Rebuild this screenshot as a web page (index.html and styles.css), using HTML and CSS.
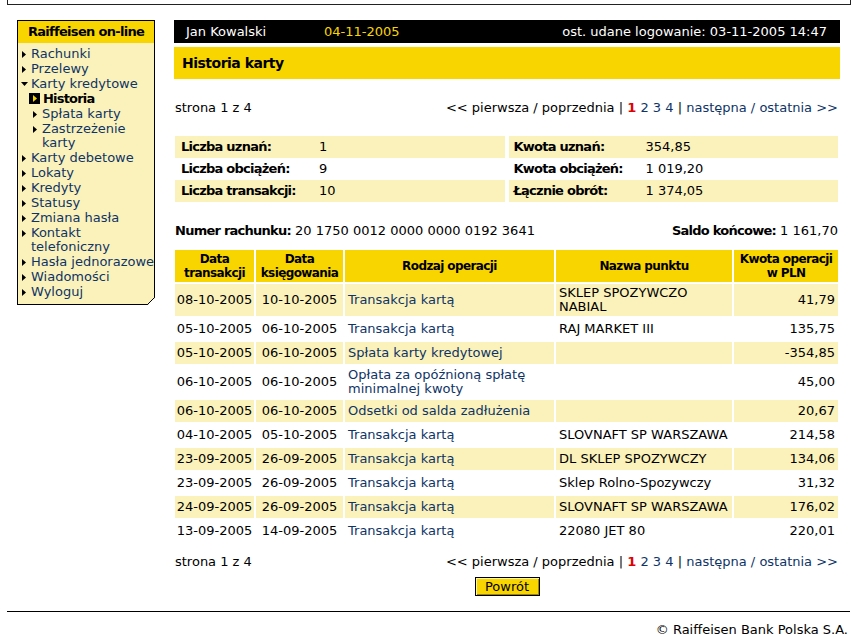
FILE: index.html
```html
<!DOCTYPE html>
<html lang="pl">
<head>
<meta charset="utf-8">
<title>Historia karty</title>
<link rel="stylesheet" href="styles.css">
</head>
<body>
<div class="topframe"></div>
<div class="layout">
  <nav class="side">
    <div class="side-head">Raiffeisen on-line</div>
    <ul class="menu">
      <li class="mi"><span class="ic"><svg width="4" height="7" viewBox="0 0 4 7"><path d="M0 0L4 3.5L0 7Z"/></svg></span><a href="#">Rachunki</a></li>
      <li class="mi"><span class="ic"><svg width="4" height="7" viewBox="0 0 4 7"><path d="M0 0L4 3.5L0 7Z"/></svg></span><a href="#">Przelewy</a></li>
      <li class="mi"><span class="ic"><svg class="down" width="7" height="4" viewBox="0 0 7 4"><path d="M0 0H7L3.5 4Z"/></svg></span><a href="#">Karty kredytowe</a></li>
      <li class="mi cur"><span class="sq"><svg width="4" height="7" viewBox="0 0 4 7"><path d="M0 0L4 3.5L0 7Z"/></svg></span><a href="#">Historia</a></li>
      <li class="mi sub"><span class="ic"><svg width="4" height="7" viewBox="0 0 4 7"><path d="M0 0L4 3.5L0 7Z"/></svg></span><a href="#">Spłata karty</a></li>
      <li class="mi sub"><span class="ic"><svg width="4" height="7" viewBox="0 0 4 7"><path d="M0 0L4 3.5L0 7Z"/></svg></span><a href="#">Zastrzeżenie<br>karty</a></li>
      <li class="mi"><span class="ic"><svg width="4" height="7" viewBox="0 0 4 7"><path d="M0 0L4 3.5L0 7Z"/></svg></span><a href="#">Karty debetowe</a></li>
      <li class="mi"><span class="ic"><svg width="4" height="7" viewBox="0 0 4 7"><path d="M0 0L4 3.5L0 7Z"/></svg></span><a href="#">Lokaty</a></li>
      <li class="mi"><span class="ic"><svg width="4" height="7" viewBox="0 0 4 7"><path d="M0 0L4 3.5L0 7Z"/></svg></span><a href="#">Kredyty</a></li>
      <li class="mi"><span class="ic"><svg width="4" height="7" viewBox="0 0 4 7"><path d="M0 0L4 3.5L0 7Z"/></svg></span><a href="#">Statusy</a></li>
      <li class="mi"><span class="ic"><svg width="4" height="7" viewBox="0 0 4 7"><path d="M0 0L4 3.5L0 7Z"/></svg></span><a href="#">Zmiana hasła</a></li>
      <li class="mi"><span class="ic"><svg width="4" height="7" viewBox="0 0 4 7"><path d="M0 0L4 3.5L0 7Z"/></svg></span><a href="#">Kontakt<br>telefoniczny</a></li>
      <li class="mi"><span class="ic"><svg width="4" height="7" viewBox="0 0 4 7"><path d="M0 0L4 3.5L0 7Z"/></svg></span><a href="#">Hasła jednorazowe</a></li>
      <li class="mi"><span class="ic"><svg width="4" height="7" viewBox="0 0 4 7"><path d="M0 0L4 3.5L0 7Z"/></svg></span><a href="#">Wiadomości</a></li>
      <li class="mi"><span class="ic"><svg width="4" height="7" viewBox="0 0 4 7"><path d="M0 0L4 3.5L0 7Z"/></svg></span><a href="#">Wyloguj</a></li>
    </ul>
    <svg class="corner" width="8" height="8" viewBox="0 0 8 8"><path d="M0.5 8L8 0.5V8Z" fill="#fff"/><path d="M0.5 7.5L7.5 0.5" stroke="#000" stroke-width="1"/></svg>
  </nav>

  <main class="main">
    <div class="userbar">
      <span class="ub-name">Jan Kowalski</span>
      <span class="ub-date">04-11-2005</span>
      <span class="ub-last">ost. udane logowanie: 03-11-2005 14:47</span>
    </div>
    <h1 class="title">Historia karty</h1>

    <div class="pager">
      <span>strona 1 z 4</span>
      <span>&lt;&lt; pierwsza / poprzednia | <b class="pg-cur">1</b> <a href="#">2</a> <a href="#">3</a> <a href="#">4</a> | <span class="nav-links"><a href="#">następna</a> / <a href="#">ostatnia &gt;&gt;</a></span></span>
    </div>

    <div class="summary">
      <div class="sum-col">
        <div class="sum-row alt"><b>Liczba uznań:</b><span>1</span></div>
        <div class="sum-row"><b>Liczba obciążeń:</b><span>9</span></div>
        <div class="sum-row alt"><b>Liczba transakcji:</b><span>10</span></div>
      </div>
      <div class="sum-col right">
        <div class="sum-row alt"><b>Kwota uznań:</b><span>354,85</span></div>
        <div class="sum-row"><b>Kwota obciążeń:</b><span>1 019,20</span></div>
        <div class="sum-row alt"><b>Łącznie obrót:</b><span>1 374,05</span></div>
      </div>
    </div>

    <div class="acct">
      <span><b>Numer rachunku:</b> 20 1750 0012 0000 0000 0192 3641</span>
      <span><b>Saldo końcowe:</b> 1 161,70</span>
    </div>

    <table class="tx">
      <colgroup>
        <col class="w1"><col class="w2"><col class="w3"><col class="w4"><col class="w5">
      </colgroup>
      <thead>
        <tr><th>Data<br>transakcji</th><th>Data<br>księgowania</th><th>Rodzaj operacji</th><th>Nazwa punktu</th><th>Kwota operacji<br>w PLN</th></tr>
      </thead>
      <tbody>
        <tr class="alt"><td class="c">08-10-2005</td><td class="c">10-10-2005</td><td><a href="#">Transakcja kartą</a></td><td>SKLEP SPOZYWCZO<br>NABIAL</td><td class="num">41,79</td></tr>
        <tr><td class="c">05-10-2005</td><td class="c">06-10-2005</td><td><a href="#">Transakcja kartą</a></td><td>RAJ MARKET III</td><td class="num">135,75</td></tr>
        <tr class="alt"><td class="c">05-10-2005</td><td class="c">06-10-2005</td><td><a href="#">Spłata karty kredytowej</a></td><td></td><td class="num">-354,85</td></tr>
        <tr><td class="c">06-10-2005</td><td class="c">06-10-2005</td><td><a href="#">Opłata za opóźnioną spłatę<br>minimalnej kwoty</a></td><td></td><td class="num">45,00</td></tr>
        <tr class="alt"><td class="c">06-10-2005</td><td class="c">06-10-2005</td><td><a href="#">Odsetki od salda zadłużenia</a></td><td></td><td class="num">20,67</td></tr>
        <tr><td class="c">04-10-2005</td><td class="c">05-10-2005</td><td><a href="#">Transakcja kartą</a></td><td>SLOVNAFT SP WARSZAWA</td><td class="num">214,58</td></tr>
        <tr class="alt"><td class="c">23-09-2005</td><td class="c">26-09-2005</td><td><a href="#">Transakcja kartą</a></td><td>DL SKLEP SPOZYWCZY</td><td class="num">134,06</td></tr>
        <tr><td class="c">23-09-2005</td><td class="c">26-09-2005</td><td><a href="#">Transakcja kartą</a></td><td>Sklep Rolno-Spozywczy</td><td class="num">31,32</td></tr>
        <tr class="alt"><td class="c">24-09-2005</td><td class="c">26-09-2005</td><td><a href="#">Transakcja kartą</a></td><td>SLOVNAFT SP WARSZAWA</td><td class="num">176,02</td></tr>
        <tr><td class="c">13-09-2005</td><td class="c">14-09-2005</td><td><a href="#">Transakcja kartą</a></td><td>22080 JET 80</td><td class="num">220,01</td></tr>
      </tbody>
    </table>

    <div class="pager bottom">
      <span>strona 1 z 4</span>
      <span>&lt;&lt; pierwsza / poprzednia | <b class="pg-cur">1</b> <a href="#">2</a> <a href="#">3</a> <a href="#">4</a> | <span class="nav-links"><a href="#">następna</a> / <a href="#">ostatnia &gt;&gt;</a></span></span>
    </div>

    <div class="actions"><button class="btn" type="button">Powrót</button></div>
  </main>
</div>
<div class="footline"></div>
<div class="copy">© Raiffeisen Bank Polska S.A.</div>
</body>
</html>
```

FILE: styles.css
```css
html, body {
  margin: 0;
  padding: 0;
  height: 100%;
  overflow: hidden;
}
body {
  font-family: "DejaVu Sans", Verdana, sans-serif;
  font-size: 13px;
  line-height: 15px;
  color: #000;
  background: #fff;
}
a {
  color: #0f3466;
  text-decoration: none;
}

.topframe {
  height: 4px;
  margin: 0 1px 0 7px;
  border: 1px solid #222;
  border-top: 0;
}

.layout {
  display: flex;
  align-items: flex-start;
  padding: 15px 0 0 17px;
}

/* sidebar */
.side {
  position: relative;
  flex: none;
  width: 136px;
  border: 1px solid #000;
  background: #fbf2bb;
}
.side-head {
  background: #f9d500;
  font-weight: bold;
  text-align: center;
  line-height: 22px;
  letter-spacing: -0.7px;
}
.menu {
  list-style: none;
  margin: 0;
  padding: 4px 0 4px;
}
.mi {
  display: flex;
  align-items: flex-start;
  line-height: 14px;
  padding-left: 4px;
  margin-bottom: 1px;
  white-space: nowrap;
}
.mi .ic {
  flex: none;
  width: 9px;
  height: 14px;
  display: flex;
  align-items: center;
}
.mi .ic svg { display: block; fill: #000; }
.mi .ic svg.down { margin-left: -1px; }
.mi.sub { padding-left: 15px; }
.mi.cur { padding-left: 11px; }
.mi .sq {
  flex: none;
  width: 11px;
  height: 11px;
  margin: 1px 3px 0 0;
  background: #000;
  display: flex;
  align-items: center;
  justify-content: center;
}
.mi .sq svg { display: block; fill: #f9d500; }
.mi.cur a {
  color: #000;
  font-weight: bold;
  letter-spacing: -0.8px;
}
.corner {
  position: absolute;
  right: -1px;
  bottom: -1px;
  display: block;
}

/* main */
.main {
  margin-left: 19px;
  width: 666px;
}
.userbar {
  display: flex;
  height: 23px;
  line-height: 23px;
  background: #000;
  color: #fff;
}
.ub-name {
  width: 138px;
  padding-left: 12px;
}
.ub-date { color: #f9d500; }
.ub-last {
  margin-left: auto;
  padding-right: 13px;
}
.title {
  margin: 4px 0 0;
  height: 32px;
  line-height: 33px;
  padding-left: 8px;
  background: #f9d500;
  font-size: 14px;
  font-weight: bold;
  letter-spacing: -0.5px;
}

.pager {
  display: flex;
  justify-content: space-between;
  margin-top: 21px;
  padding: 0 2px 0 1px;
}
.pager.bottom { margin-top: 10px; }
.pg-cur { color: #e00000; }
.nav-links { color: #0f3466; }

.summary {
  display: grid;
  grid-template-columns: 1fr 1fr;
  column-gap: 4px;
  margin-top: 21px;
  padding: 0 2px 0 1px;
}
.sum-row {
  display: flex;
  height: 22px;
  line-height: 22px;
  padding-left: 6px;
}
.sum-row.alt { background: #fbf2bb; }
.sum-row b {
  flex: none;
  width: 138px;
  letter-spacing: -0.75px;
}
.sum-col.right .sum-row { padding-left: 5px; }
.sum-col.right .sum-row b { width: 132px; }

.acct {
  display: flex;
  justify-content: space-between;
  margin-top: 21px;
  padding: 0 2px 0 1px;
}
.acct b { letter-spacing: -0.75px; }

/* transactions */
.tx {
  margin-top: 10px;
  margin-left: -1px;
  width: 667px;
  table-layout: fixed;
  border-collapse: separate;
  border-spacing: 2px;
}
.tx .w1 { width: 79px; }
.tx .w2 { width: 87px; }
.tx .w3 { width: 209px; }
.tx .w4 { width: 176px; }
.tx .w5 { width: 104px; }
.tx thead tr { height: 32px; }
.tx th {
  background: #f9d500;
  font-size: 12px;
  line-height: 14px;
  letter-spacing: -0.6px;
  font-weight: bold;
  padding: 2px 0;
  white-space: nowrap;
  vertical-align: middle;
  text-align: center;
}
.tx tbody tr { height: 22px; }
.tx td {
  padding: 2px 3px;
  line-height: 14px;
  white-space: nowrap;
  vertical-align: middle;
}
.tx tr.alt td { background: #fbf2bb; }
.tx td.c {
  text-align: center;
  padding-left: 1px;
  padding-right: 1px;
}
.tx td.num { text-align: right; }

.actions {
  display: flex;
  justify-content: center;
  margin-top: 8px;
}
.btn {
  width: 65px;
  height: 19px;
  padding: 0;
  font-family: "DejaVu Sans", Verdana, sans-serif;
  font-size: 13px;
  line-height: 15px;
  color: #000;
  background: #f9d500;
  border: 1px solid #000;
  box-shadow: inset 1px 1px 0 #fff7b0, inset -1px -1px 0 #9c8400;
}

.footline {
  margin: 15px 2px 0 7px;
  border-top: 1px solid #000;
}
.copy {
  text-align: right;
  padding: 10px 4px 0 0;
}
```
